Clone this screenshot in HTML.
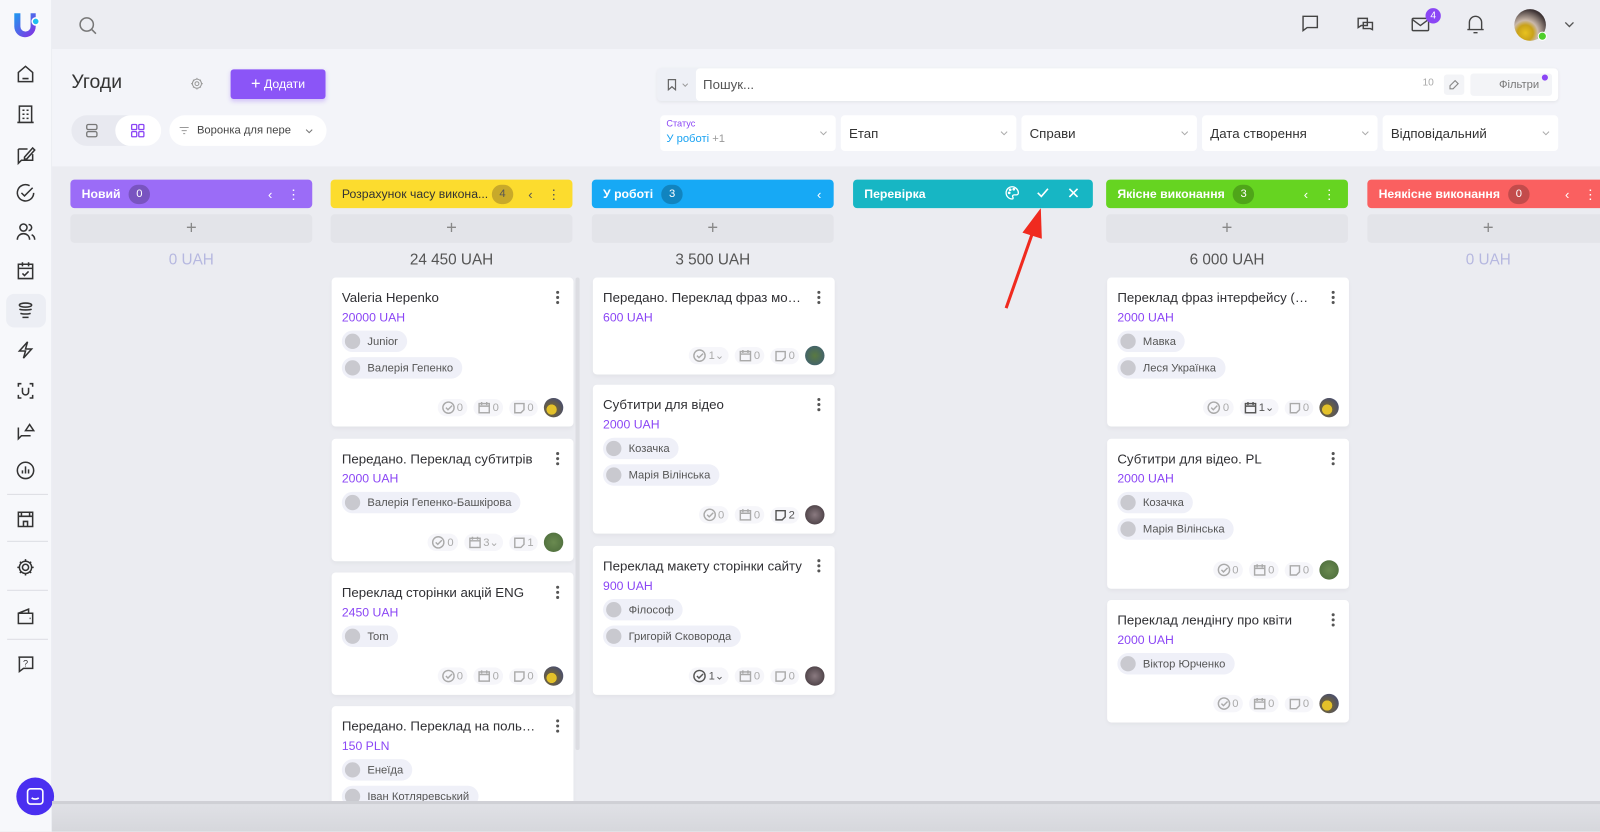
<!DOCTYPE html>
<html><head><meta charset="utf-8"><style>
*{box-sizing:border-box;margin:0;padding:0}
html,body{width:1600px;height:832px;overflow:hidden;background:#ebecf1;font-family:"Liberation Sans","Noto Sans CJK SC",sans-serif}
#w{position:absolute;left:0;top:0;width:1568px;height:815px;transform:scale(1.020408);transform-origin:0 0;background:#ebecf1;overflow:hidden}
.abs{position:absolute}
#side{left:0;top:0;width:51px;height:815px;background:#f7f8fb;border-right:1px solid #eceef3}
#top{left:51px;top:0;right:0;height:48px;background:#ecedf2}
#hdr{left:51px;top:48px;right:0;height:115px;background:#f3f4f9}
.si{position:absolute;left:14px;width:22px;height:22px}
.sep{position:absolute;left:7px;width:40px;height:1px;background:#dcdde3}
svg{display:block}
.col{position:absolute;top:176px;width:237px}
.ch{height:28px;border-radius:4px;color:#fff;font-size:12px;font-weight:bold;display:flex;align-items:center;padding-left:11px;position:relative}
.badge{display:inline-block;min-width:21px;height:19px;border-radius:10px;background:rgba(0,0,0,.22);text-align:center;line-height:19px;font-weight:normal;margin-left:8px;font-size:11px}
.ch .r{position:absolute;right:12px;top:7px;display:flex;gap:14px;font-size:13px;font-weight:normal}
.add{margin-top:6px;height:28px;border-radius:4px;background:#e3e4e9;text-align:center;color:#888;font-size:18px;line-height:27px}
.tot{text-align:center;font-size:15px;color:#555;margin-top:8px}
.tot.z{color:#b6b8e0}
.card{position:absolute;left:0;width:237px;background:#fff;border-radius:4px;box-shadow:0 2px 4px rgba(0,0,0,.04)}
.t{position:absolute;left:10px;top:12px;font-size:13px;color:#2f2f33;white-space:nowrap;width:195px;overflow:hidden;text-overflow:ellipsis}
.dots{position:absolute;right:14px;top:13px;width:3px}
.dots i{display:block;width:3px;height:3px;background:#555;border-radius:50%;margin-bottom:2px}
.p{position:absolute;left:10px;top:32px;font-size:12px;color:#8b46f5}
.chip{position:absolute;left:10px;height:21px;border-radius:11px;background:#eff0f8;font-size:11px;color:#555;display:flex;align-items:center;padding:0 9px 0 3px}
.chip b{width:15px;height:15px;border-radius:50%;background:#c9c9cf;margin-right:7px;display:inline-block}
.ft{position:absolute;right:10px;bottom:9px;display:flex;align-items:center;gap:6px;font-size:11px;color:#aaa}
.ft span{display:flex;align-items:center;gap:2px;background:#f6f6fa;border-radius:10px;padding:2px 4px}
.ft svg{stroke:#aaa;fill:none;stroke-width:1.4}
.av{width:19px;height:19px;border-radius:50%;background:radial-gradient(circle at 40% 60%,#e3c12a 0,#e3c12a 30%,#6b6040 32%,#4d5068 70%)}
.fl{position:absolute;top:113px;height:35px;background:#fff;border-radius:4px;font-size:13px;color:#333;padding-left:8px;line-height:35px}
</style></head><body><div id="w">

<div id="side" class="abs">
 <svg class="abs" style="left:11px;top:11px" width="28" height="28" viewBox="0 0 28 28"><defs><linearGradient id="g" x1="0" y1="0" x2="1" y2="1"><stop offset="0" stop-color="#1e9bf0"/><stop offset="1" stop-color="#8a2be2"/></linearGradient></defs><path d="M3 2h6v13a5 5 0 0 0 10 0V2h5v13a10 10 0 0 1-21 0z" fill="url(#g)"/><circle cx="24" cy="10" r="3.5" fill="#1ec0f0" stroke="#fff" stroke-width="1.5"/></svg>
 <div class="abs" style="left:6px;top:288px;width:39px;height:33px;border-radius:8px;background:#eceef4"></div>
 <svg class="si" style="top:62px" viewBox="0 0 22 22" fill="none" stroke="#333" stroke-width="1.5"><path d="M4 9l7-6 7 6v9H4z M8 15h6"/></svg>
 <svg class="si" style="top:101px" viewBox="0 0 22 22" fill="none" stroke="#333" stroke-width="1.5"><path d="M5 3h12v16H5z M3 19h16 M8 7h2M12 7h2M8 11h2M12 11h2M8 15h2M12 15h2"/></svg>
 <svg class="si" style="top:141px" viewBox="0 0 22 22" fill="none" stroke="#333" stroke-width="1.5"><path d="M4 5h9 M4 5v14l3-3h11v-6 M10 13l8-9 2 2-8 9h-2z"/></svg>
 <svg class="si" style="top:178px" viewBox="0 0 22 22" fill="none" stroke="#333" stroke-width="1.5"><path d="M19 11a8 8 0 1 1-4-7 M7 11l3 3 8-8"/></svg>
 <svg class="si" style="top:216px" viewBox="0 0 22 22" fill="none" stroke="#333" stroke-width="1.5"><circle cx="9" cy="7" r="3.5"/><path d="M3 19c0-4 3-6 6-6s6 2 6 6 M14 4a3 3 0 0 1 0 6 M17 14c2 1 3 3 3 5"/></svg>
 <svg class="si" style="top:254px" viewBox="0 0 22 22" fill="none" stroke="#333" stroke-width="1.5"><path d="M4 5h14v14H4z M4 9h14 M8 3v4 M14 3v4 M8 14l2 2 4-4"/></svg>
 <svg class="si" style="top:293px" viewBox="0 0 22 22" fill="none" stroke="#333" stroke-width="1.5"><ellipse cx="11" cy="6" rx="6" ry="2"/><path d="M5 10c2 1 10 1 12 0 M6 14c2 1 8 1 10 0 M8 18h6"/></svg>
 <svg class="si" style="top:332px" viewBox="0 0 22 22" fill="none" stroke="#333" stroke-width="1.5"><path d="M13 3L5 12h6l-2 7 8-9h-6z"/></svg>
 <svg class="si" style="top:372px" viewBox="0 0 22 22" fill="none" stroke="#333" stroke-width="1.5"><path d="M4 7V4h3 M15 4h3v3 M18 15v3h-3 M7 18H4v-3 M8 8v4a3 3 0 0 0 6 0V8"/></svg>
 <svg class="si" style="top:411px" viewBox="0 0 22 22" fill="none" stroke="#333" stroke-width="1.5"><path d="M4 8v11l3-3h9 M11 11l4-6 4 6z"/></svg>
 <svg class="si" style="top:450px" viewBox="0 0 22 22" fill="none" stroke="#333" stroke-width="1.5"><circle cx="11" cy="11" r="8"/><path d="M8 14v-3 M11 14V7 M14 14v-4"/></svg>
 <div class="sep" style="top:484px"></div>
 <svg class="si" style="top:498px" viewBox="0 0 22 22" fill="none" stroke="#333" stroke-width="1.5"><path d="M4 4h14v14H4z M4 8h14 M9 18v-5h4v5 M7 4v4 M15 4v4"/></svg>
 <div class="sep" style="top:530px"></div>
 <svg class="si" style="top:545px" viewBox="0 0 22 22" fill="none" stroke="#333" stroke-width="1.5"><circle cx="11" cy="11" r="3"/><path d="M11 3v2M11 17v2M3 11h2M17 11h2M5.5 5.5l1.5 1.5M15 15l1.5 1.5M5.5 16.5L7 15M15 7l1.5-1.5"/><circle cx="11" cy="11" r="6"/></svg>
 <div class="sep" style="top:578px"></div>
 <svg class="si" style="top:593px" viewBox="0 0 22 22" fill="none" stroke="#333" stroke-width="1.5"><path d="M4 8h14v10H4z M4 8l10-4v4 M15 13h1"/></svg>
 <div class="sep" style="top:626px"></div>
 <svg class="si" style="top:640px" viewBox="0 0 22 22" fill="none" stroke="#333" stroke-width="1.5"><path d="M4 4h14v11H9l-4 3V4z"/><text x="11" y="13" font-size="9" text-anchor="middle" fill="#333" stroke="none" font-family="Liberation Sans">?</text></svg>
 <div class="abs" style="left:16px;top:762px;width:37px;height:37px;border-radius:50%;background:#4a2ff0"><svg style="margin:10px" width="17" height="17" viewBox="0 0 17 17" fill="none" stroke="#fff" stroke-width="1.6"><rect x="1" y="1" width="15" height="15" rx="3"/><path d="M5 10c2 1.5 5 1.5 7 0"/></svg></div>
</div>

<div id="top" class="abs">
 <svg class="abs" style="left:26px;top:16px" width="18" height="18" viewBox="0 0 18 18" fill="none" stroke="#777" stroke-width="1.5"><circle cx="8" cy="8" r="6.5"/><path d="M13 13l4 4"/></svg>
 <svg class="abs" style="left:1224px;top:14px" width="18" height="18" viewBox="0 0 18 18" fill="none" stroke="#444" stroke-width="1.4"><path d="M2 2h14v11H6l-4 3z"/></svg>
 <svg class="abs" style="left:1278px;top:15px" width="18" height="18" viewBox="0 0 18 18" fill="none" stroke="#444" stroke-width="1.4"><path d="M2 3h9v7H5l-3 2z M7 7h9v7l-2-1H7z"/></svg>
 <svg class="abs" style="left:1332px;top:16px" width="18" height="16" viewBox="0 0 18 16" fill="none" stroke="#444" stroke-width="1.4"><rect x="1" y="2" width="16" height="12" rx="1"/><path d="M1 3l8 6 8-6"/></svg>
 <div class="abs" style="left:1346px;top:8px;width:15px;height:15px;border-radius:50%;background:#8b46f5;color:#fff;font-size:10px;text-align:center;line-height:15px">4</div>
 <svg class="abs" style="left:1386px;top:14px" width="18" height="20" viewBox="0 0 18 20" fill="none" stroke="#444" stroke-width="1.4"><path d="M3 15V8a6 6 0 0 1 12 0v7h2H1z M7 18h4"/></svg>
 <div class="abs" style="left:1433px;top:9px;width:31px;height:31px;border-radius:50%;background:radial-gradient(circle at 35% 75%,#e8c21f 0,#c9a21a 25%,#cbb9aa 40%,#3e3435 75%)"></div>
 <div class="abs" style="left:1456px;top:31px;width:9px;height:9px;border-radius:50%;background:#4ecf2a;border:1.5px solid #fff"></div>
 <svg class="abs" style="left:1482px;top:21px" width="10" height="7" viewBox="0 0 10 7" fill="none" stroke="#555" stroke-width="1.3"><path d="M1 1l4 4 4-4"/></svg>
</div>

<div id="hdr" class="abs">
 <div class="abs" style="left:19px;top:22px;font-size:19px;color:#333">Угоди</div>
 <svg class="abs" style="left:135px;top:27px" width="14" height="14" viewBox="0 0 22 22" fill="none" stroke="#999" stroke-width="1.6"><circle cx="11" cy="11" r="3"/><circle cx="11" cy="11" r="7"/><path d="M11 2v2M11 18v2M2 11h2M18 11h2M5 5l1.5 1.5M15.5 15.5L17 17M5 17l1.5-1.5M15.5 6.5L17 5"/></svg>
 <div class="abs" style="left:175px;top:20px;width:93px;height:29px;border-radius:3px;background:#8b55f7;color:#fff;font-size:12px;line-height:29px;text-align:center;box-shadow:0 2px 4px rgba(139,85,247,.3)"><span style="font-size:16px;vertical-align:-1px">+</span> Додати</div>
 <div class="abs" style="left:19px;top:65px;width:88px;height:30px;border-radius:15px;background:#e8e9f0"></div>
 <div class="abs" style="left:62px;top:65px;width:45px;height:30px;border-radius:15px;background:#fff"></div>
 <svg class="abs" style="left:33px;top:73px" width="12" height="14" viewBox="0 0 12 14" fill="none" stroke="#777" stroke-width="1.3"><rect x="1" y="1" width="10" height="5" rx="1.5"/><rect x="1" y="8" width="10" height="5" rx="1.5"/></svg>
 <svg class="abs" style="left:77px;top:73px" width="14" height="14" viewBox="0 0 14 14" fill="none" stroke="#8b46f5" stroke-width="1.3"><rect x="1" y="1" width="5" height="5" rx="1"/><rect x="8" y="1" width="5" height="5" rx="1"/><rect x="1" y="8" width="5" height="5" rx="1"/><rect x="8" y="8" width="5" height="5" rx="1"/></svg>
 <div class="abs" style="left:115px;top:65px;width:154px;height:30px;border-radius:15px;background:#fff;font-size:11px;color:#444;line-height:30px;padding-left:27px">Воронка для пере</div>
 <svg class="abs" style="left:125px;top:76px" width="9" height="8" viewBox="0 0 9 8" stroke="#999" stroke-width="1"><path d="M0 1h9M2 4h5M3.5 7h2"/></svg>
 <svg class="abs" style="left:248px;top:78px" width="8" height="5" viewBox="0 0 8 5" fill="none" stroke="#777"><path d="M1 1l3 3 3-3"/></svg>
 <div class="abs" style="left:593px;top:19px;width:883px;height:32px;border-radius:4px;background:#eef0f6;box-shadow:0 1px 3px rgba(0,0,0,.06)"></div>
 <svg class="abs" style="left:603px;top:29px" width="9" height="12" viewBox="0 0 9 12" fill="none" stroke="#666" stroke-width="1.2"><path d="M1 1h7v10L4.5 8 1 11z"/></svg>
 <svg class="abs" style="left:617px;top:33px" width="7" height="5" viewBox="0 0 7 5" fill="none" stroke="#999"><path d="M1 1l2.5 2.5L6 1"/></svg>
 <div class="abs" style="left:631px;top:19px;width:845px;height:32px;border-radius:4px;background:#fff;font-size:13px;color:#555;line-height:32px;padding-left:7px">Пошук...</div>
 <div class="abs" style="left:1343px;top:28px;font-size:10px;color:#aaa">10</div>
 <div class="abs" style="left:1364px;top:25px;width:20px;height:20px;border-radius:3px;background:#f3f4f7"><svg style="margin:5px" width="10" height="10" viewBox="0 0 10 10" fill="none" stroke="#888" stroke-width="1.1"><path d="M6 1l3 3-5 5H1V6z"/></svg></div>
 <div class="abs" style="left:1390px;top:24px;width:80px;height:22px;border-radius:3px;background:#f3f4f7;font-size:11px;color:#777;line-height:22px;padding-left:28px">Фільтри</div>
 <div class="abs" style="left:1460px;top:25px;width:6px;height:6px;border-radius:50%;background:#8b46f5"></div>
</div>
<div class="abs" style="left:647px;top:113px;width:172px;height:35px;background:#fff;border-radius:4px"><div style="position:absolute;left:6px;top:3px;font-size:9px;color:#8b46f5">Статус</div><div style="position:absolute;left:6px;top:17px;font-size:11px;color:#1aa3f2">У роботі <span style="color:#999">+1</span></div><svg style="position:absolute;right:8px;top:15px" width="8" height="5" viewBox="0 0 8 5" fill="none" stroke="#aaa"><path d="M1 1l3 3 3-3"/></svg></div>
<div class="fl" style="left:824px;width:172px">Етап<svg style="position:absolute;right:8px;top:15px" width="8" height="5" viewBox="0 0 8 5" fill="none" stroke="#aaa"><path d="M1 1l3 3 3-3"/></svg></div>
<div class="fl" style="left:1001px;width:172px">Справи<svg style="position:absolute;right:8px;top:15px" width="8" height="5" viewBox="0 0 8 5" fill="none" stroke="#aaa"><path d="M1 1l3 3 3-3"/></svg></div>
<div class="fl" style="left:1178px;width:172px">Дата створення<svg style="position:absolute;right:8px;top:15px" width="8" height="5" viewBox="0 0 8 5" fill="none" stroke="#aaa"><path d="M1 1l3 3 3-3"/></svg></div>
<div class="fl" style="left:1355px;width:172px">Відповідальний<svg style="position:absolute;right:8px;top:15px" width="8" height="5" viewBox="0 0 8 5" fill="none" stroke="#aaa"><path d="M1 1l3 3 3-3"/></svg></div>

<div class="col" style="left:69px"><div class="ch" style="background:#9b6cf7">Новий<span class="badge">0</span><div class="r"><span>‹</span><span>⋮</span></div></div><div class="add">+</div><div class="tot z">0 UAH</div></div>
<div class="col" style="left:324px"><div class="ch" style="background:#fcdc2e;color:#333;font-weight:normal">Розрахунок часу викона...<span class="badge" style="background:#c8a92a;color:#555;margin-left:auto;margin-right:58px">4</span><div class="r" style="color:#555"><span>‹</span><span>⋮</span></div></div><div class="add">+</div><div class="tot">24 450 UAH</div></div>
<div class="col" style="left:580px"><div class="ch" style="background:#17a9f5">У роботі<span class="badge">3</span><div class="r"><span>‹</span></div></div><div class="add">+</div><div class="tot">3 500 UAH</div></div>
<div class="col" style="left:836px;width:235px"><div class="ch" style="background:#17b6c4">Перевірка<div class="r" style="gap:16px;top:6px"><svg width="14" height="14" viewBox="0 0 14 14" fill="none" stroke="#fff" stroke-width="1.3"><path d="M7 1a6 6 0 1 0 0 12c1 0 1-1 .5-2s0-2 1.5-2H11a2 2 0 0 0 2-2c0-3-3-6-6-6z"/><circle cx="4" cy="7" r=".7"/><circle cx="5" cy="4" r=".7"/><circle cx="8.5" cy="3.5" r=".7"/></svg><svg width="14" height="14" viewBox="0 0 14 14" fill="none" stroke="#fff" stroke-width="1.6"><path d="M2 7l3.5 3.5L12 3"/></svg><svg width="14" height="14" viewBox="0 0 14 14" fill="none" stroke="#fff" stroke-width="1.6"><path d="M3 3l8 8M11 3l-8 8"/></svg></div></div></div>
<div class="col" style="left:1084px"><div class="ch" style="background:#66d421">Якісне виконання<span class="badge">3</span><div class="r"><span>‹</span><span>⋮</span></div></div><div class="add">+</div><div class="tot">6 000 UAH</div></div>
<div class="col" style="left:1340px"><div class="ch" style="background:#fa6060">Неякісне виконання<span class="badge">0</span><div class="r"><span>‹</span><span>⋮</span></div></div><div class="add">+</div><div class="tot z">0 UAH</div></div>

<svg class="abs" style="left:980px;top:200px" width="50" height="105" viewBox="0 0 50 105"><path d="M6 102L33 25" stroke="#f02a1f" stroke-width="3"/><path d="M40 4L22 28l19 6z" fill="#f02a1f"/></svg>

<div class="abs" style="left:564px;top:272px;width:4px;height:463px;background:#dcdde2;border-radius:2px"></div>

<div class="card" style="left:325px;top:272px;height:146px"><div class="t">Valeria Hepenko</div><div class="dots"><i></i><i></i><i></i></div><div class="p">20000 UAH</div><div class="chip" style="top:52px"><b></b>Junior</div><div class="chip" style="top:78px"><b></b>Валерія Гепенко</div><div class="ft"><span><svg width="13" height="13" viewBox="0 0 13 13"><circle cx="6.5" cy="6.5" r="5.5"/><path d="M4 6.5l2 2 4-4"/></svg>0</span><span><svg width="13" height="13" viewBox="0 0 13 13"><rect x="1.5" y="2.5" width="10" height="9"/><path d="M1.5 5h10M4 1v3M9 1v3"/></svg>0</span><span><svg width="12" height="12" viewBox="0 0 12 12"><path d="M1.5 1.5h9v6l-3 3h-6z"/></svg> 0</span><div class="av"></div></div></div>
<div class="card" style="left:325px;top:430px;height:120px"><div class="t">Передано. Переклад субтитрів</div><div class="dots"><i></i><i></i><i></i></div><div class="p">2000 UAH</div><div class="chip" style="top:52px"><b></b>Валерія Гепенко-Башкірова</div><div class="ft"><span><svg width="13" height="13" viewBox="0 0 13 13"><circle cx="6.5" cy="6.5" r="5.5"/><path d="M4 6.5l2 2 4-4"/></svg>0</span><span><svg width="13" height="13" viewBox="0 0 13 13"><rect x="1.5" y="2.5" width="10" height="9"/><path d="M1.5 5h10M4 1v3M9 1v3"/></svg>3⌄</span><span><svg width="12" height="12" viewBox="0 0 12 12"><path d="M1.5 1.5h9v6l-3 3h-6z"/></svg> 1</span><div class="av" style="background:radial-gradient(circle,#6a8a50,#4a6a3a)"></div></div></div>
<div class="card" style="left:325px;top:561px;height:120px"><div class="t">Переклад сторінки акцій ENG</div><div class="dots"><i></i><i></i><i></i></div><div class="p">2450 UAH</div><div class="chip" style="top:52px"><b></b>Tom</div><div class="ft"><span><svg width="13" height="13" viewBox="0 0 13 13"><circle cx="6.5" cy="6.5" r="5.5"/><path d="M4 6.5l2 2 4-4"/></svg>0</span><span><svg width="13" height="13" viewBox="0 0 13 13"><rect x="1.5" y="2.5" width="10" height="9"/><path d="M1.5 5h10M4 1v3M9 1v3"/></svg>0</span><span><svg width="12" height="12" viewBox="0 0 12 12"><path d="M1.5 1.5h9v6l-3 3h-6z"/></svg> 0</span><div class="av"></div></div></div>
<div class="card" style="left:325px;top:692px;height:120px"><div class="t">Передано. Переклад на польську</div><div class="dots"><i></i><i></i><i></i></div><div class="p">150 PLN</div><div class="chip" style="top:52px"><b></b>Енеїда</div><div class="chip" style="top:78px"><b></b>Іван Котляревський</div></div>

<div class="card" style="left:581px;top:272px;height:95px"><div class="t">Передано. Переклад фраз мобільн</div><div class="dots"><i></i><i></i><i></i></div><div class="p">600 UAH</div><div class="ft"><span><svg width="13" height="13" viewBox="0 0 13 13"><circle cx="6.5" cy="6.5" r="5.5"/><path d="M4 6.5l2 2 4-4"/></svg>1⌄</span><span><svg width="13" height="13" viewBox="0 0 13 13"><rect x="1.5" y="2.5" width="10" height="9"/><path d="M1.5 5h10M4 1v3M9 1v3"/></svg>0</span><span><svg width="12" height="12" viewBox="0 0 12 12"><path d="M1.5 1.5h9v6l-3 3h-6z"/></svg> 0</span><div class="av" style="background:radial-gradient(circle,#5a7a40,#3a5a7a)"></div></div></div>
<div class="card" style="left:581px;top:377px;height:146px"><div class="t">Субтитри для відео</div><div class="dots"><i></i><i></i><i></i></div><div class="p">2000 UAH</div><div class="chip" style="top:52px"><b></b>Козачка</div><div class="chip" style="top:78px"><b></b>Марія Вілінська</div><div class="ft"><span><svg width="13" height="13" viewBox="0 0 13 13"><circle cx="6.5" cy="6.5" r="5.5"/><path d="M4 6.5l2 2 4-4"/></svg>0</span><span><svg width="13" height="13" viewBox="0 0 13 13"><rect x="1.5" y="2.5" width="10" height="9"/><path d="M1.5 5h10M4 1v3M9 1v3"/></svg>0</span><span style="color:#555"><svg width="12" height="12" viewBox="0 0 12 12" style="stroke:#555"><path d="M1.5 1.5h9v6l-3 3h-6z"/></svg> 2</span><div class="av" style="background:radial-gradient(circle,#8a7a80,#3a3035)"></div></div></div>
<div class="card" style="left:581px;top:535px;height:146px"><div class="t">Переклад макету сторінки сайту</div><div class="dots"><i></i><i></i><i></i></div><div class="p">900 UAH</div><div class="chip" style="top:52px"><b></b>Філософ</div><div class="chip" style="top:78px"><b></b>Григорій Сковорода</div><div class="ft"><span style="color:#555"><svg width="13" height="13" viewBox="0 0 13 13" style="stroke:#555"><circle cx="6.5" cy="6.5" r="5.5"/><path d="M4 6.5l2 2 4-4"/></svg>1⌄</span><span><svg width="13" height="13" viewBox="0 0 13 13"><rect x="1.5" y="2.5" width="10" height="9"/><path d="M1.5 5h10M4 1v3M9 1v3"/></svg>0</span><span><svg width="12" height="12" viewBox="0 0 12 12"><path d="M1.5 1.5h9v6l-3 3h-6z"/></svg> 0</span><div class="av" style="background:radial-gradient(circle,#8a7a80,#3a3035)"></div></div></div>

<div class="card" style="left:1085px;top:272px;height:146px"><div class="t">Переклад фраз інтерфейсу (мобільн</div><div class="dots"><i></i><i></i><i></i></div><div class="p">2000 UAH</div><div class="chip" style="top:52px"><b></b>Мавка</div><div class="chip" style="top:78px"><b></b>Леся Українка</div><div class="ft"><span><svg width="13" height="13" viewBox="0 0 13 13"><circle cx="6.5" cy="6.5" r="5.5"/><path d="M4 6.5l2 2 4-4"/></svg>0</span><span style="color:#555"><svg width="13" height="13" viewBox="0 0 13 13" style="stroke:#555"><rect x="1.5" y="2.5" width="10" height="9"/><path d="M1.5 5h10M4 1v3M9 1v3"/></svg>1⌄</span><span><svg width="12" height="12" viewBox="0 0 12 12"><path d="M1.5 1.5h9v6l-3 3h-6z"/></svg> 0</span><div class="av"></div></div></div>
<div class="card" style="left:1085px;top:430px;height:147px"><div class="t">Субтитри для відео. PL</div><div class="dots"><i></i><i></i><i></i></div><div class="p">2000 UAH</div><div class="chip" style="top:52px"><b></b>Козачка</div><div class="chip" style="top:78px"><b></b>Марія Вілінська</div><div class="ft"><span><svg width="13" height="13" viewBox="0 0 13 13"><circle cx="6.5" cy="6.5" r="5.5"/><path d="M4 6.5l2 2 4-4"/></svg>0</span><span><svg width="13" height="13" viewBox="0 0 13 13"><rect x="1.5" y="2.5" width="10" height="9"/><path d="M1.5 5h10M4 1v3M9 1v3"/></svg>0</span><span><svg width="12" height="12" viewBox="0 0 12 12"><path d="M1.5 1.5h9v6l-3 3h-6z"/></svg> 0</span><div class="av" style="background:radial-gradient(circle,#6a8a50,#4a6a3a)"></div></div></div>
<div class="card" style="left:1085px;top:588px;height:120px"><div class="t">Переклад лендінгу про квіти</div><div class="dots"><i></i><i></i><i></i></div><div class="p">2000 UAH</div><div class="chip" style="top:52px"><b></b>Віктор Юрченко</div><div class="ft"><span><svg width="13" height="13" viewBox="0 0 13 13"><circle cx="6.5" cy="6.5" r="5.5"/><path d="M4 6.5l2 2 4-4"/></svg>0</span><span><svg width="13" height="13" viewBox="0 0 13 13"><rect x="1.5" y="2.5" width="10" height="9"/><path d="M1.5 5h10M4 1v3M9 1v3"/></svg>0</span><span><svg width="12" height="12" viewBox="0 0 12 12"><path d="M1.5 1.5h9v6l-3 3h-6z"/></svg> 0</span><div class="av"></div></div></div>

<div class="abs" style="left:51px;top:787px;right:0;bottom:0;background:linear-gradient(#e0e1e6,#d6d7dc)"></div>
<div class="abs" style="left:51px;top:785px;right:0;height:3px;background:#cfd0d5"></div>
</div></body></html>
